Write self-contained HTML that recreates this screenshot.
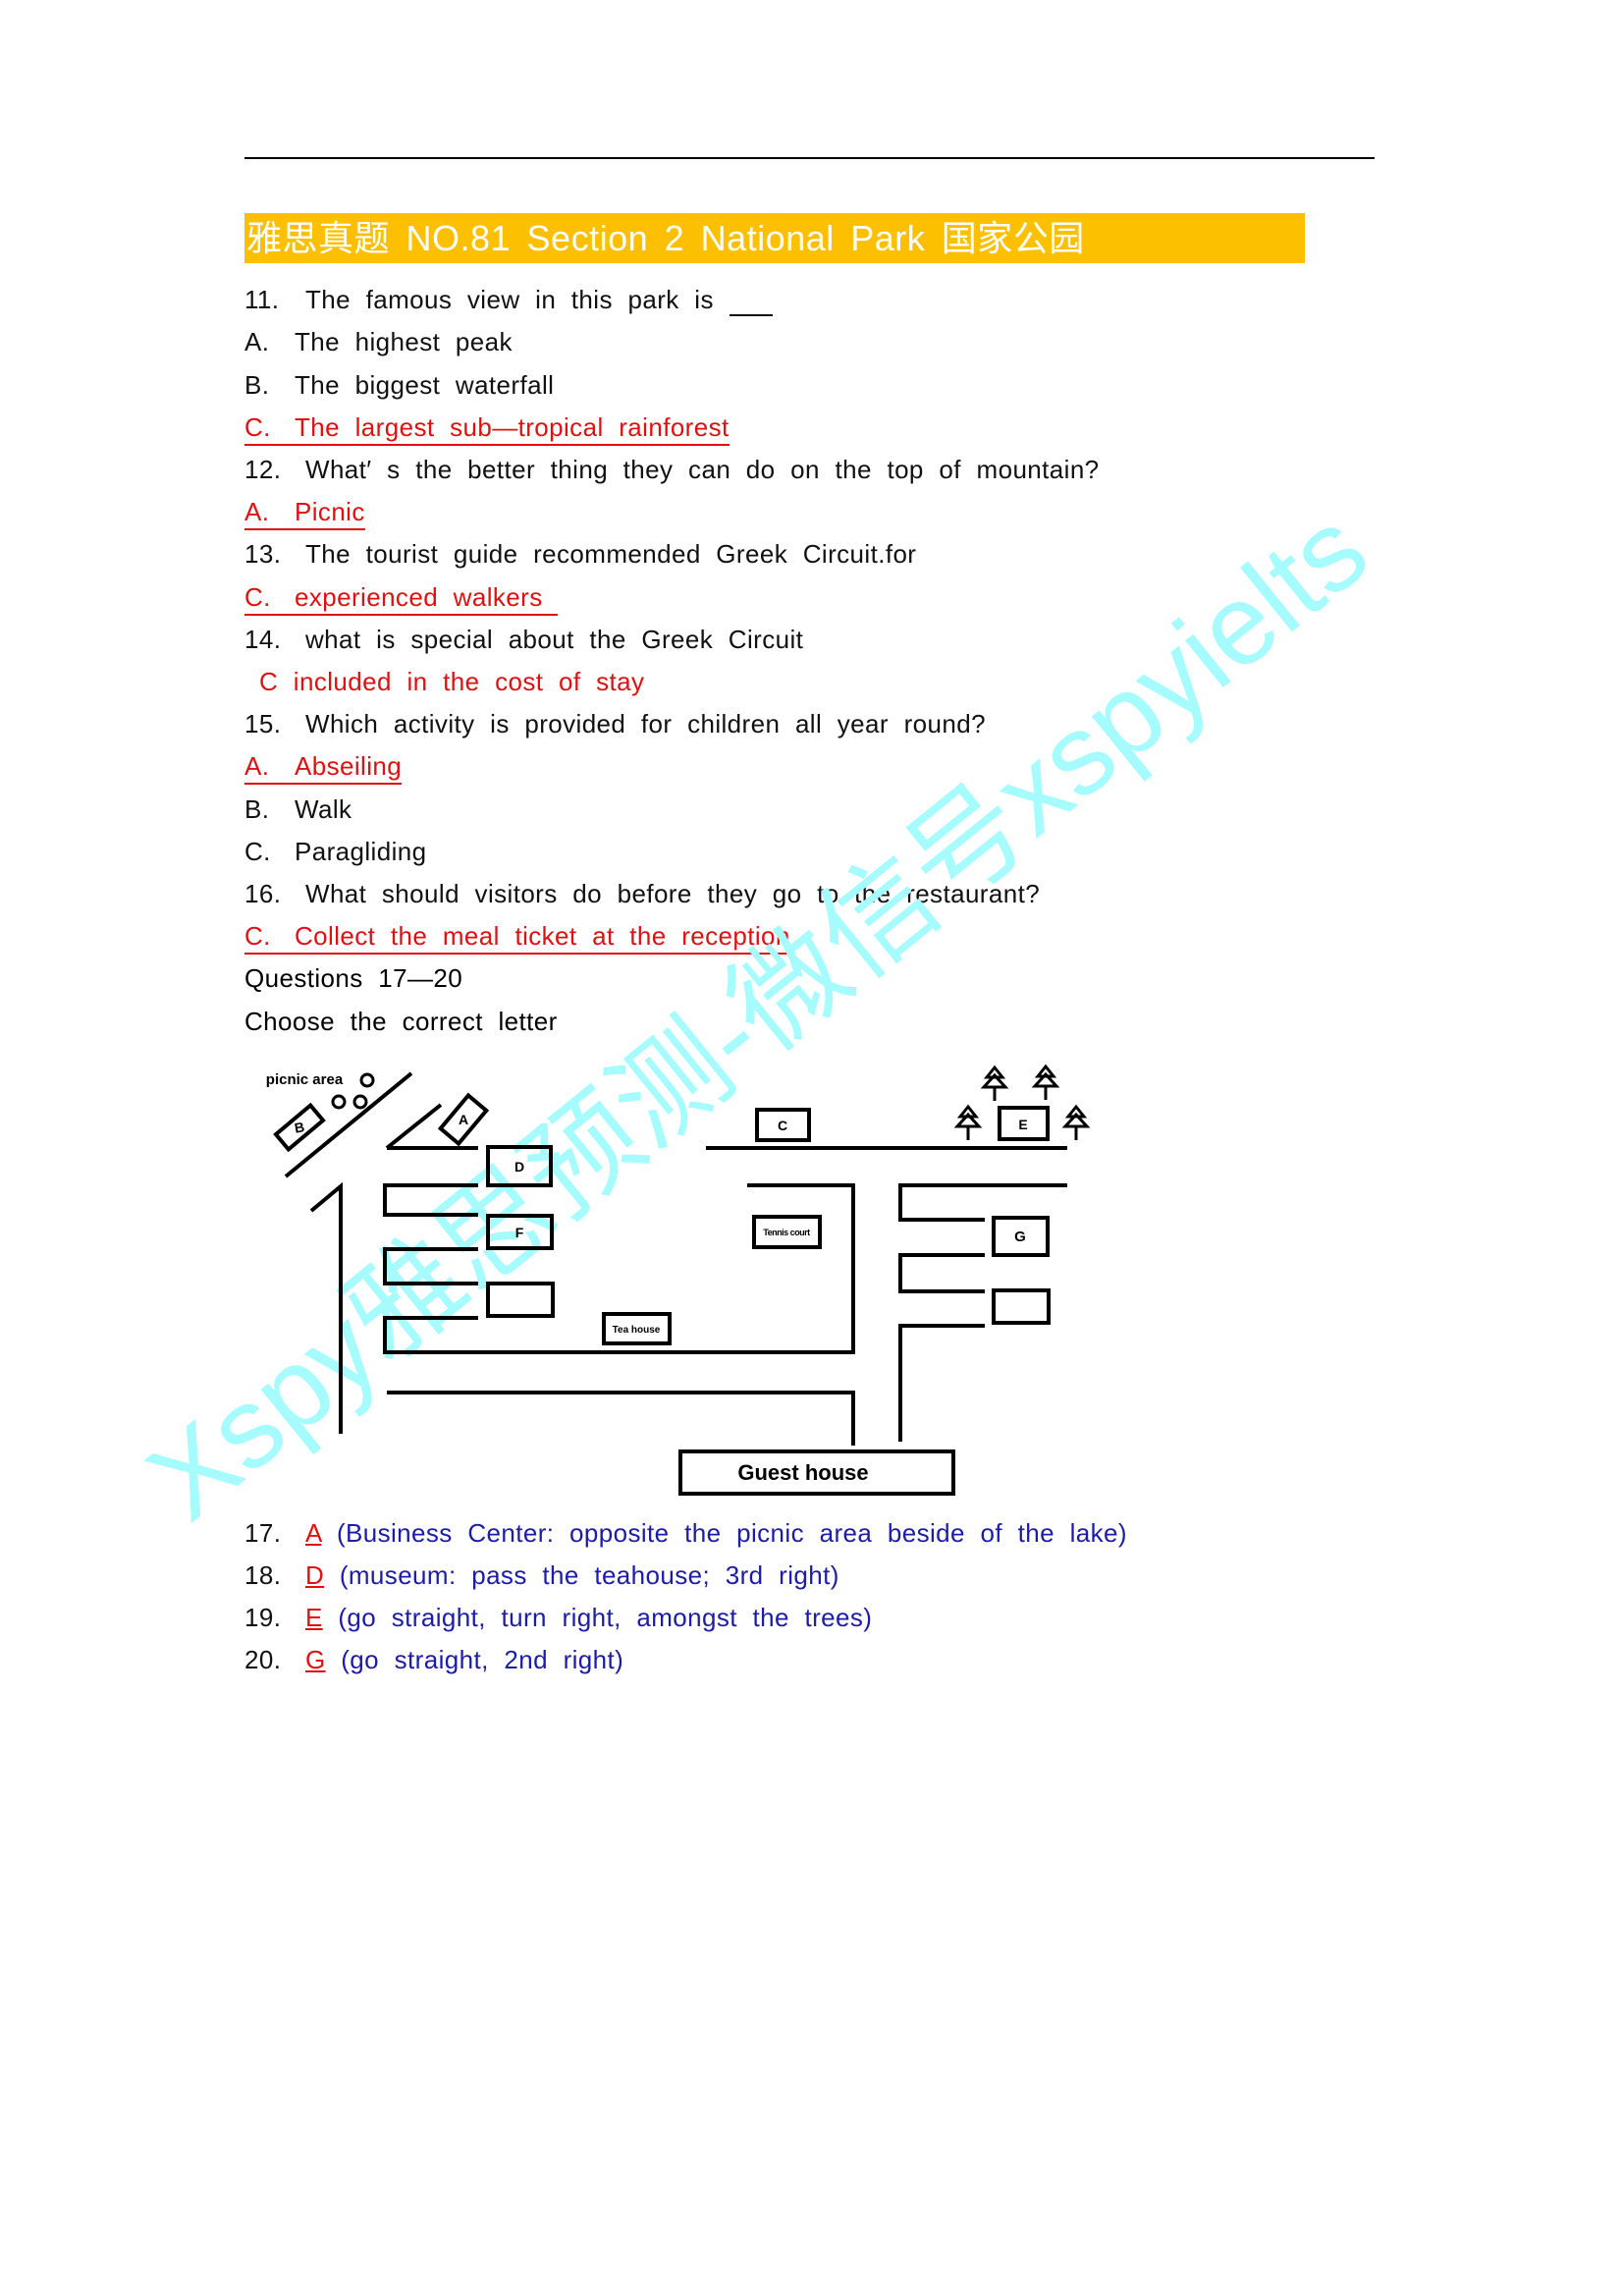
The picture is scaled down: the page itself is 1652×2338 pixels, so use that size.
<!DOCTYPE html>
<html><head><meta charset="utf-8"><style>
body{margin:0;background:#fff;}
#p{position:relative;width:1652px;height:2338px;overflow:hidden;background:#fff;font-family:"Liberation Sans","Noto Sans CJK SC",sans-serif;}
.l{position:absolute;left:249px;height:43px;line-height:43px;font-size:26px;white-space:nowrap;word-spacing:8px;letter-spacing:0.4px;color:#111;}
.n{display:inline-block;width:62px;}
.m{display:inline-block;width:51px;}
.r{color:#e01010;}
.u{border-bottom:2px solid #e01010;padding-bottom:0;display:inline-block;line-height:34px;}
.b{color:#1c1ca8;}
.wm{position:absolute;left:765px;top:1025px;transform:translate(-50%,-50%) rotate(-39deg);font-size:116px;color:#a6fbfd;white-space:nowrap;font-family:"Liberation Sans","Noto Sans CJK SC",sans-serif;}
</style></head><body><div id="p">
<div style="position:absolute;left:249px;top:160px;width:1151px;height:2px;background:#000"></div>
<div style="position:absolute;left:249px;top:217px;width:1080px;height:51px;background:#fdc000"></div>
<div style="position:absolute;left:251px;top:217px;height:51px;line-height:51px;font-size:36px;color:#fff;white-space:nowrap;word-spacing:6px;letter-spacing:0.5px;">雅思真题 NO.81 Section 2 National Park 国家公园</div>

<div class="l" style="top:284px"><span class="n">11.</span>The famous view in this park is <span style="display:inline-block;width:44px;border-bottom:2px solid #111;line-height:30px">&nbsp;</span></div>
<div class="l" style="top:327px"><span class="m">A.</span>The highest peak</div>
<div class="l" style="top:371px"><span class="m">B.</span>The biggest waterfall</div>
<div class="l r" style="top:414px"><span class="u"><span class="m">C.</span>The largest sub—tropical rainforest</span></div>
<div class="l" style="top:457px"><span class="n">12.</span>What′ s the better thing they can do on the top of mountain?</div>
<div class="l r" style="top:500px"><span class="u"><span class="m">A.</span>Picnic</span></div>
<div class="l" style="top:543px"><span class="n">13.</span>The tourist guide recommended Greek Circuit.for</div>
<div class="l r" style="top:587px"><span class="u"><span class="m">C.</span>experienced walkers&nbsp;</span></div>
<div class="l" style="top:630px"><span class="n">14.</span>what is special about the Greek Circuit</div>
<div class="l r" style="top:673px;left:264px">C included in the cost of stay</div>
<div class="l" style="top:716px"><span class="n">15.</span>Which activity is provided for children all year round?</div>
<div class="l r" style="top:759px"><span class="u"><span class="m">A.</span>Abseiling</span></div>
<div class="l" style="top:803px"><span class="m">B.</span>Walk</div>
<div class="l" style="top:846px"><span class="m">C.</span>Paragliding</div>
<div class="l" style="top:889px"><span class="n">16.</span>What should visitors do before they go to the restaurant?</div>
<div class="l r" style="top:932px"><span class="u"><span class="m">C.</span>Collect the meal ticket at the reception</span></div>
<div class="l" style="top:975px;color:#000">Questions 17—20</div>
<div class="l" style="top:1019px;color:#000">Choose the correct letter</div>

<div class="wm">Xspy雅思预测-微信号xspyielts</div>

<svg style="position:absolute;left:0;top:0" width="1652" height="2338">
<g stroke="#000" stroke-width="4" fill="none">
<line x1="291" y1="1198" x2="419" y2="1093"/>
<line x1="394" y1="1169" x2="449" y2="1125"/>
<line x1="394" y1="1169" x2="487" y2="1169"/>
<rect x="497" y="1168" width="64" height="39"/>
<line x1="719" y1="1169" x2="1087" y2="1169"/>
<rect x="771" y="1130" width="53" height="31"/>
<rect x="1018" y="1128" width="49" height="32"/>
<polyline points="317,1233 347,1208 347,1460"/>
<polyline points="487,1207 392,1207 392,1237 487,1237"/>
<rect x="497" y="1238" width="65" height="33"/>
<polyline points="487,1272 392,1272 392,1307 487,1307"/>
<rect x="497" y="1307" width="66" height="33"/>
<polyline points="487,1342 392,1342 392,1377 869,1377 869,1207 761,1207"/>
<rect x="615" y="1338" width="67" height="30"/>
<rect x="768" y="1239" width="67" height="31"/>
<polyline points="394,1418 869,1418 869,1472"/>
<polyline points="1087,1207 917,1207 917,1242 1003,1242"/>
<rect x="1012" y="1240" width="55" height="38"/>
<polyline points="1003,1278 917,1278 917,1315 1003,1315"/>
<rect x="1012" y="1314" width="56" height="33"/>
<polyline points="1003,1350 917,1350 917,1468"/>
<rect x="693" y="1478" width="278" height="43"/>
<rect x="-23" y="-10" width="46" height="20" transform="translate(305,1148) rotate(-40)"/>
<rect x="-22" y="-12" width="44" height="24" transform="translate(472,1140) rotate(-50)"/>
<circle cx="374" cy="1100" r="6" stroke-width="3"/>
<circle cx="345" cy="1122" r="6" stroke-width="3"/>
<circle cx="367" cy="1122" r="6" stroke-width="3"/>
</g>
<g stroke="#000" stroke-width="3" fill="none">
<g transform="translate(1013,1103)"><path d="M0,-16 L-8,-6 L8,-6 Z M0,-8 L-11,4 L11,4 Z M0,4 V18"/></g>
<g transform="translate(1065,1102)"><path d="M0,-16 L-8,-6 L8,-6 Z M0,-8 L-11,4 L11,4 Z M0,4 V18"/></g>
<g transform="translate(986,1143)"><path d="M0,-16 L-8,-6 L8,-6 Z M0,-8 L-11,4 L11,4 Z M0,4 V18"/></g>
<g transform="translate(1096,1143)"><path d="M0,-16 L-8,-6 L8,-6 Z M0,-8 L-11,4 L11,4 Z M0,4 V18"/></g>
</g>
<g font-family="Liberation Sans,sans-serif" font-weight="bold" fill="#000" text-anchor="middle">
<text x="310" y="1104" font-size="15">picnic area</text>
<text x="529" y="1193" font-size="14">D</text>
<text x="797" y="1151" font-size="14">C</text>
<text x="1042" y="1150" font-size="14">E</text>
<text x="529" y="1260" font-size="14">F</text>
<text x="1039" y="1264" font-size="15">G</text>
<text x="648" y="1357" font-size="10">Tea house</text>
<text x="801" y="1258" font-size="9" letter-spacing="-0.5">Tennis court</text>
<text x="818" y="1507" font-size="22">Guest house</text>
<text x="305" y="1153" font-size="14" transform="rotate(-10 305 1148)">B</text>
<text x="472" y="1145" font-size="14">A</text>
</g>
</svg>

<div class="l" style="top:1540px"><span class="n">17.</span><span class="r" style="text-decoration:underline">A</span> <span class="b">(Business Center: opposite the picnic area beside of the lake)</span></div>
<div class="l" style="top:1583px"><span class="n">18.</span><span class="r" style="text-decoration:underline">D</span> <span class="b">(museum: pass the teahouse; 3rd right)</span></div>
<div class="l" style="top:1626px"><span class="n">19.</span><span class="r" style="text-decoration:underline">E</span> <span class="b">(go straight, turn right, amongst the trees)</span></div>
<div class="l" style="top:1669px"><span class="n">20.</span><span class="r" style="text-decoration:underline">G</span> <span class="b">(go straight, 2nd right)</span></div>
</div></body></html>
